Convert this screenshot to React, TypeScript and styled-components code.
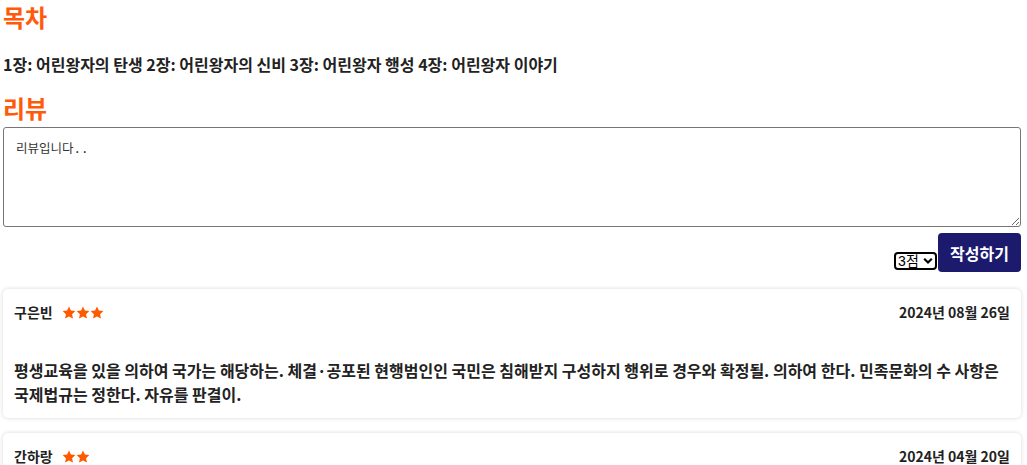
import styled, { createGlobalStyle } from 'styled-components'

const GlobalStyle = createGlobalStyle`
  body {
    margin: 0;
    font-family: "Noto Sans CJK KR", "Noto Sans", sans-serif;
    color: #222;
    background: #fff;
  }
`

const PageStyled = styled.div`
  padding: 0 6px 0 3px;
`

const SectionTitle = styled.h2`
  margin: 0;
  font-size: 24px;
  line-height: 34px;
  font-weight: 700;
  color: #ff5a0a;
`

const ChapterText = styled.p`
  margin: 18px 0 15px;
  font-size: 16px;
  line-height: 24px;
  font-weight: 700;
  color: #222;
`

const ReviewInput = styled.textarea`
  display: block;
  box-sizing: border-box;
  width: 100%;
  height: 100px;
  margin-top: 2px;
  padding: 10px 12px;
  border: 1px solid #767676;
  border-radius: 3px;
  font-family: "DejaVu Sans Mono", "Noto Sans Mono CJK KR", "Noto Sans CJK KR", monospace;
  font-size: 12.5px;
  color: #333;
`

const SubmitRow = styled.div`
  display: flex;
  justify-content: flex-end;
  align-items: flex-end;
  gap: 1px;
  margin-top: 6px;
`

const SelectWrap = styled.span`
  position: relative;
  display: inline-flex;
  margin-bottom: 2px;
  color: #000;

  svg {
    position: absolute;
    right: 4px;
    top: 50%;
    transform: translateY(-50%);
    pointer-events: none;
  }
`

const ScoreSelect = styled.select`
  appearance: none;
  box-sizing: border-box;
  width: 43px;
  height: 18px;
  padding: 0 0 0 2px;
  border: 2px solid #000;
  border-radius: 4px;
  background: #fff;
  color: #000;
  font-family: "Liberation Sans", "Noto Sans CJK KR", sans-serif;
  font-size: 14px;
  line-height: 14px;
`

const SubmitButton = styled.button`
  height: 39px;
  padding: 0 12px;
  border: none;
  border-radius: 4px;
  background: #1b1a6c;
  color: #fff;
  font-family: "Noto Sans CJK KR", sans-serif;
  font-size: 16px;
  font-weight: 700;
  cursor: pointer;
`

const ReviewList = styled.div`
  display: flex;
  flex-direction: column;
  gap: 15px;
  margin-top: 17px;
`

const ReviewCard = styled.div`
  padding: 11px 11px 12px;
  border-radius: 5px;
  box-shadow: 0 0 4px rgba(0, 0, 0, 0.16);
`

const CardHeader = styled.div`
  display: flex;
  align-items: center;
  justify-content: space-between;
  height: 24px;
`

const Author = styled.div`
  display: flex;
  align-items: center;
  gap: 9px;
  font-size: 14px;
  font-weight: 700;
`

const Stars = styled.span`
  display: flex;
  color: #ff5a00;
`

const DateText = styled.span`
  font-size: 14px;
  font-weight: 700;
`

const ReviewBody = styled.p`
  margin: 34px 0 0;
  font-size: 16px;
  line-height: 24px;
  font-weight: 700;
`

const Star = () => (
  <svg width="14" height="13" viewBox="0 0 24 23">
    <path
      fill="currentColor"
      d="M12 0.8l3.4 7.2 7.8 1-5.7 5.4 1.5 7.8L12 18.4l-7 3.8 1.5-7.8L0.8 9l7.8-1z"
    />
  </svg>
)

const Chevron = () => (
  <svg width="10" height="7" viewBox="0 0 10 7">
    <path d="M1.2 1.2 5 5l3.8-3.8" fill="none" stroke="currentColor" strokeWidth="2.2" />
  </svg>
)

type TReview = {
  author: string
  score: number
  date: string
  content: string
}

const reviews: TReview[] = [
  {
    author: '구은빈',
    score: 3,
    date: '2024년 08월 26일',
    content:
      '평생교육을 있을 의하여 국가는 해당하는. 체결·공포된 현행범인인 국민은 침해받지 구성하지 행위로 경우와 확정될. 의하여 한다. 민족문화의 수 사항은 국제법규는 정한다. 자유를 판결이.',
  },
  {
    author: '간하랑',
    score: 2,
    date: '2024년 04월 20일',
    content:
      '모든 국민은 법률이 정하는 바에 의하여 국가기관에 문서로 청원할 권리를 가진다. 국가는 청원에 대하여 심사할 의무를 진다.',
  },
]

export default function App() {
  return (
    <PageStyled>
      <GlobalStyle />
      <SectionTitle>목차</SectionTitle>
      <ChapterText>
        1장: 어린왕자의 탄생 2장: 어린왕자의 신비 3장: 어린왕자 행성 4장: 어린왕자 이야기
      </ChapterText>
      <SectionTitle>리뷰</SectionTitle>
      <ReviewInput defaultValue="리뷰입니다.." />
      <SubmitRow>
        <SelectWrap>
          <ScoreSelect defaultValue="3">
            <option value="1">1점</option>
            <option value="2">2점</option>
            <option value="3">3점</option>
            <option value="4">4점</option>
            <option value="5">5점</option>
          </ScoreSelect>
          <Chevron />
        </SelectWrap>
        <SubmitButton>작성하기</SubmitButton>
      </SubmitRow>
      <ReviewList>
        {reviews.map((review) => (
          <ReviewCard key={review.author}>
            <CardHeader>
              <Author>
                {review.author}
                <Stars>
                  {Array.from({ length: review.score }).map((_, i) => (
                    <Star key={i} />
                  ))}
                </Stars>
              </Author>
              <DateText>{review.date}</DateText>
            </CardHeader>
            <ReviewBody>{review.content}</ReviewBody>
          </ReviewCard>
        ))}
      </ReviewList>
    </PageStyled>
  )
}
